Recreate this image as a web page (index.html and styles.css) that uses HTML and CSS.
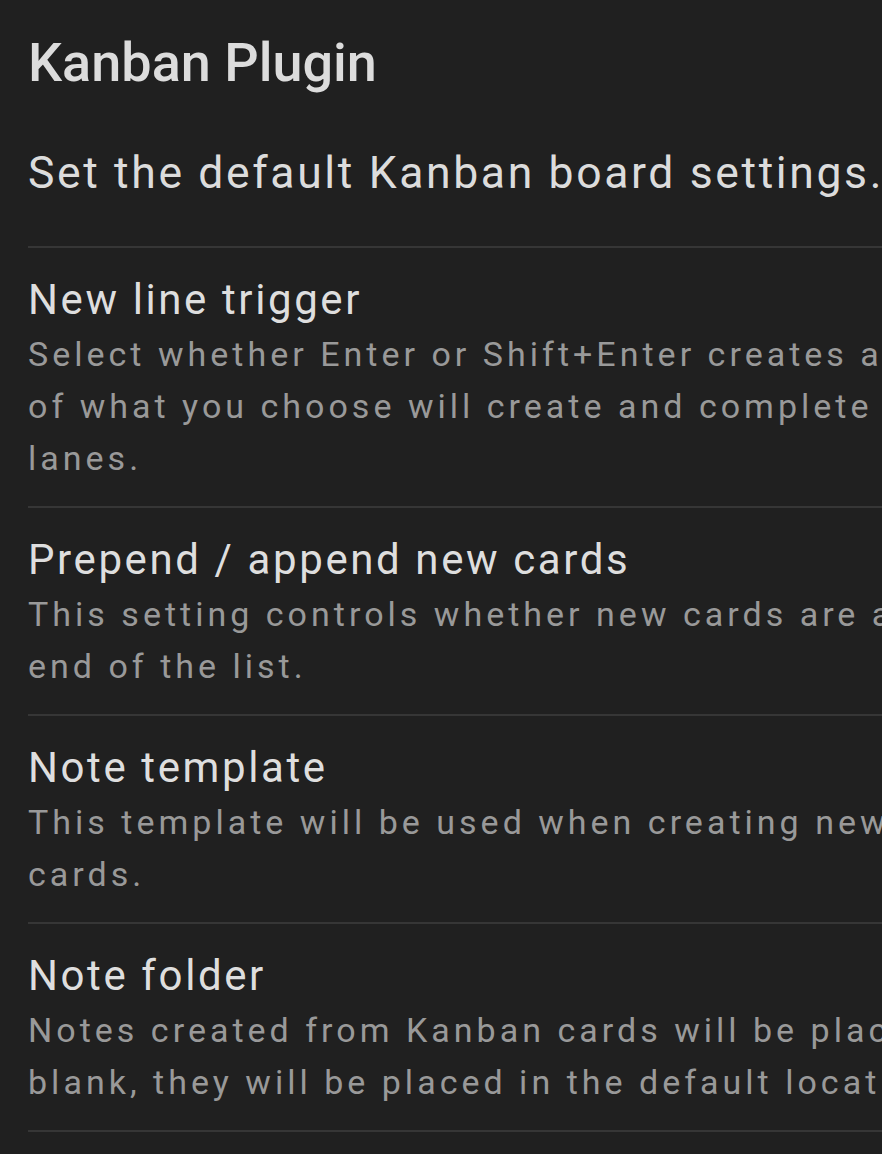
FILE: index.html
```html
<!DOCTYPE html>
<html lang="en">
<head>
    <meta charset="UTF-8">
    <meta name="viewport" content="width=device-width, initial-scale=1.0">
    <title>Kanban Plugin</title>
    <link rel="stylesheet" href="styles.css">
</head>
<body>
    <div class="settings">
        <h2 class="settings-title">Kanban Plugin</h2>
        <p class="settings-intro">Set the default Kanban board settings.</p>

        <div class="setting-item">
            <div class="setting-name">New line trigger</div>
            <div class="setting-desc">Select whether Enter or Shift+Enter creates a new line. The opposite<br>of what you choose will create and complete editing of cards and<br>lanes.</div>
        </div>
        <div class="setting-item">
            <div class="setting-name">Prepend / append new cards</div>
            <div class="setting-desc">This setting controls whether new cards are added to the beginning or<br>end of the list.</div>
        </div>
        <div class="setting-item">
            <div class="setting-name">Note template</div>
            <div class="setting-desc">This template will be used when creating new notes from Kanban<br>cards.</div>
        </div>
        <div class="setting-item">
            <div class="setting-name">Note folder</div>
            <div class="setting-desc">Notes created from Kanban cards will be placed in this folder. If<br>blank, they will be placed in the default location for this vault.</div>
        </div>
    </div>
</body>
</html>
```

FILE: styles.css
```css
html, body {
    overflow: hidden;
}
body {
    background-color: #202020;
    margin: 0;
    font-family: Roboto, "Noto Sans", sans-serif;
    color: #dcdcdc;
}
.settings {
    width: 1400px;
    padding-left: 28px;
}
.settings-title {
    margin: 31px 0 0;
    font-size: 54px;
    line-height: 64px;
    font-weight: 500;
    letter-spacing: 0;
    color: #dcdcdc;
}
.settings-intro {
    margin: 50px 0 45px;
    font-size: 44.5px;
    line-height: 56px;
    letter-spacing: 0.059em;
    white-space: nowrap;
}
.setting-item {
    border-top: 2px solid #363636;
    padding: 26px 0 22px;
}
.setting-item:last-child {
    border-bottom: 2px solid #363636;
}
.setting-name {
    font-size: 42px;
    line-height: 52px;
    letter-spacing: 0.062em;
    color: #dedede;
}
.setting-desc {
    margin-top: 2px;
    font-size: 34px;
    line-height: 52px;
    letter-spacing: 0.118em;
    color: #999999;
    white-space: nowrap;
}
```
